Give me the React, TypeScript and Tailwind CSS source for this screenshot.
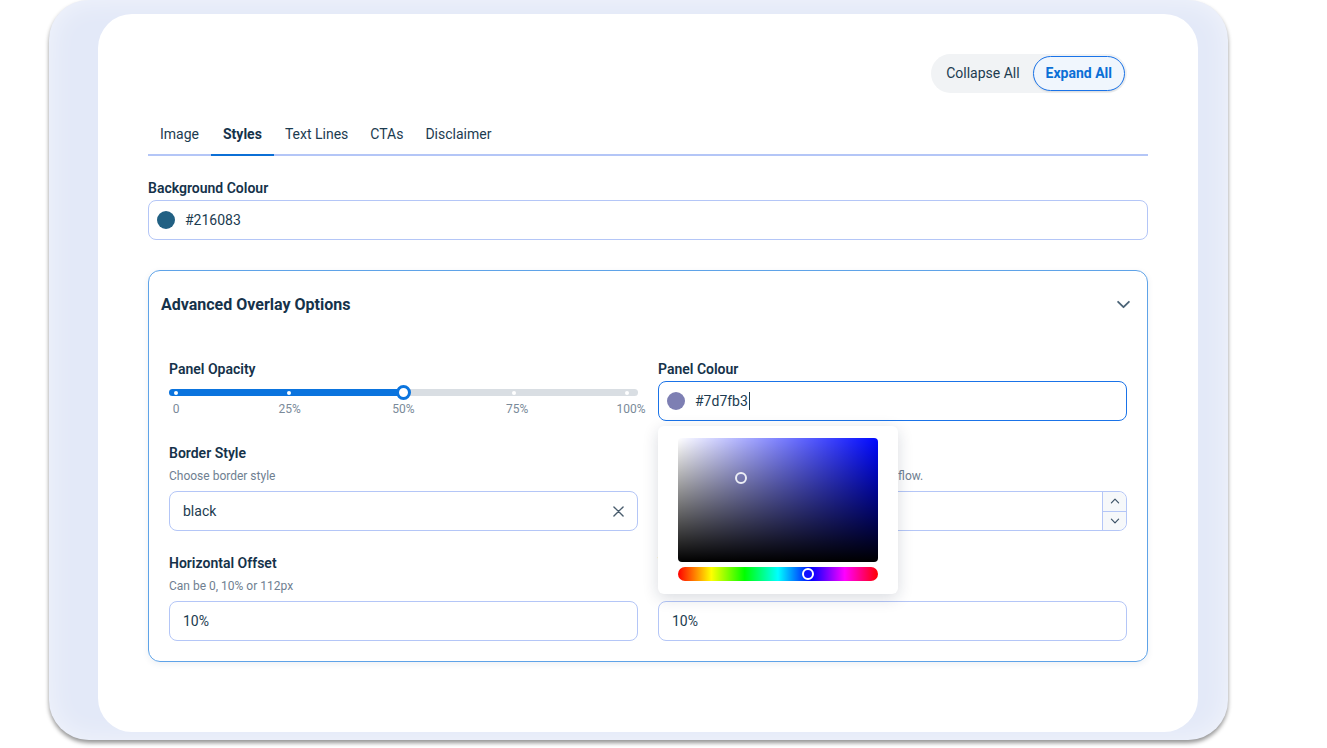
import React from "react";

const font = { fontFamily: "Roboto, 'Noto Sans', sans-serif" };

function Field({
  label,
  helper,
  children,
}: {
  label: string;
  helper?: string;
  children: React.ReactNode;
}) {
  return (
    <div className="flex flex-col">
      <div className="text-[14px] leading-[20px] font-semibold text-[#15324a]">{label}</div>
      {helper ? (
        <div className="mt-[5px] mb-[7px] whitespace-nowrap text-[12px] leading-[16px] text-[#6f8091]">{helper}</div>
      ) : (
        <div className="h-[2px]" />
      )}
      {children}
    </div>
  );
}

function TextInput({ value, right }: { value: string; right?: React.ReactNode }) {
  return (
    <div className="flex h-[40px] items-center rounded-[8px] border border-[#b4c6f7] bg-white pl-[13px] text-[14px] text-[#1c3b50]">
      <span className="flex-1">{value}</span>
      {right}
    </div>
  );
}

function Chevron({ up, className }: { up?: boolean; className?: string }) {
  return (
    <svg viewBox="0 0 16 10" className={className} fill="none" stroke="currentColor" strokeWidth="2" strokeLinecap="round" strokeLinejoin="round">
      {up ? <path d="M2 8 L8 2 L14 8" /> : <path d="M2 2 L8 8 L14 2" />}
    </svg>
  );
}

export default function App() {
  return (
    <div className="h-[748px] w-full overflow-hidden bg-white" style={font}>
      <div className="ml-[49px] flex h-[740px] w-[1179px] rounded-[40px] bg-[#e3e9f8] pl-[49px] pr-[30px] pt-[14px] pb-[8px] shadow-[inset_0_0_28px_rgba(255,255,255,0.55),0_3px_4px_rgba(0,0,0,0.42)]">
        <div className="flex h-[718px] w-[1100px] flex-col rounded-[34px] bg-white px-[50px] pt-[40px]">
          {/* Toggle */}
          <div className="flex justify-end pr-[21px]">
            <div className="flex h-[39px] items-center rounded-full bg-[#f1f3f5] p-[2px]">
              <button className="px-[13px] text-[14px] text-[#1c3b50]">Collapse All</button>
              <button className="h-[35px] rounded-full border border-[#1a73e8] bg-[#f0f6fd] px-[12px] text-[14px] font-bold text-[#0b6fd6] shadow-[0_1px_2px_rgba(0,0,0,0.1)]">
                Expand All
              </button>
            </div>
          </div>

          {/* Tabs */}
          <div className="mt-[21px] flex border-b-2 border-[#b4c6f7] text-[14px] text-[#1c3b50]">
            <div className="px-[12px] pt-[10px] pb-[10px] leading-[20px]">Image</div>
            <div className="-mb-[2px] border-b-2 border-[#0b6fd6] px-[12px] pt-[10px] pb-[10px] font-bold leading-[20px] text-[#15324a]">
              Styles
            </div>
            <div className="px-[11px] pt-[10px] pb-[10px] leading-[20px]">Text Lines</div>
            <div className="px-[11px] pt-[10px] pb-[10px] leading-[20px]">CTAs</div>
            <div className="px-[11px] pt-[10px] pb-[10px] leading-[20px]">Disclaimer</div>
          </div>

          {/* Background Colour */}
          <div className="mt-[22px]">
            <div className="text-[14px] leading-[20px] font-semibold text-[#15324a]">Background Colour</div>
            <div className="mt-[2px] flex h-[40px] items-center gap-[10px] rounded-[8px] border border-[#b4c6f7] pl-[8px] text-[14px] text-[#1c3b50]">
              <span className="h-[18px] w-[18px] rounded-full bg-[#216083]" />
              <span>#216083</span>
            </div>
          </div>

          {/* Accordion */}
          <div className="mt-[30px] rounded-[12px] border border-[#5fa3e8] shadow-[0_2px_6px_rgba(30,60,120,0.08)]">
            <div className="flex h-[67px] items-center justify-between pl-[12px] pr-[16px]">
              <span className="text-[16px] font-bold text-[#15324a]">Advanced Overlay Options</span>
              <Chevron className="h-[9px] w-[15px] text-[#4a6376]" />
            </div>
            <div className="grid grid-cols-2 gap-x-[20px] gap-y-[22px] px-[20px] pt-[21px] pb-[20px]">
              {/* Panel Opacity */}
              <div className="flex flex-col">
                <div className="text-[14px] leading-[20px] font-semibold text-[#15324a]">Panel Opacity</div>
                <div className="relative mt-[10px] h-[7px] rounded-full bg-[#d9dee3]">
                  <div className="h-full w-[234px] rounded-full bg-[#0b74de]" />
                  <div className="absolute inset-0 flex items-center justify-between px-[7px]">
                    <span className="h-[4px] w-[4px] -translate-x-1/2 rounded-full bg-white" />
                    <span className="h-[4px] w-[4px] -translate-x-1/2 rounded-full bg-white" />
                    <span className="h-[4px] w-[4px] -translate-x-1/2 rounded-full bg-transparent" />
                    <span className="h-[4px] w-[4px] -translate-x-1/2 rounded-full bg-white" />
                    <span className="h-[4px] w-[4px] -translate-x-1/2 rounded-full bg-white" />
                  </div>
                  <div className="absolute left-[227px] top-[-4px] h-[15px] w-[15px] rounded-full border-[3px] border-[#0b74de] bg-white" />
                </div>
                <div className="mt-[5px] flex justify-between px-[7px] text-[12px] leading-[16px] text-[#7a8a99]">
                  <span className="flex w-0 justify-center whitespace-nowrap">0</span>
                  <span className="flex w-0 justify-center whitespace-nowrap">25%</span>
                  <span className="flex w-0 justify-center whitespace-nowrap">50%</span>
                  <span className="flex w-0 justify-center whitespace-nowrap">75%</span>
                  <span className="flex w-0 justify-center whitespace-nowrap">100%</span>
                </div>
              </div>

              {/* Panel Colour */}
              <div className="relative flex flex-col">
                <div className="text-[14px] leading-[20px] font-semibold text-[#15324a]">Panel Colour</div>
                <div className="mt-[2px] flex h-[40px] items-center gap-[10px] rounded-[8px] border-[1.5px] border-[#1a73e8] pl-[8px] text-[14px] text-[#1c3b50]">
                  <span className="h-[18px] w-[18px] rounded-full bg-[#7d7fb3]" />
                  <span className="flex items-center">
                    #7d7fb3
                    <span className="ml-[1px] h-[18px] w-px bg-[#1c3b50]" />
                  </span>
                </div>
                {/* Color picker popover */}
                <div className="absolute left-0 top-[67px] z-10 w-[240px] rounded-[6px] bg-white px-[20px] pt-[12px] pb-[13px] shadow-[0_4px_16px_rgba(20,30,60,0.16)]">
                  <div className="relative h-[124px] w-[200px] rounded-[4px] bg-[#0008ff] bg-[linear-gradient(to_top,#000,rgba(0,0,0,0)),linear-gradient(to_right,#fff,rgba(255,255,255,0))]">
                    <div className="absolute left-[57px] top-[34px] h-[12px] w-[12px] rounded-full border-2 border-[#eceef5]" />
                  </div>
                  <div className="relative mt-[5px] h-[14px] w-[200px] rounded-full bg-[linear-gradient(to_right,#f00,#ff0,#0f0,#0ff,#00f,#f0f,#f00)]">
                    <div className="absolute left-[124px] top-[1px] h-[12px] w-[12px] rounded-full border-[2.5px] border-white bg-[#1010ff]" />
                  </div>
                </div>
              </div>

              {/* Border Style */}
              <Field label="Border Style" helper="Choose border style">
                <TextInput
                  value="black"
                  right={
                    <svg viewBox="0 0 12 12" className="mr-[13px] h-[11px] w-[11px] text-[#4a5d6e]" fill="none" stroke="currentColor" strokeWidth="1.5" strokeLinecap="round">
                      <path d="M1 1 L11 11 M11 1 L1 11" />
                    </svg>
                  }
                />
              </Field>

              {/* Border Width */}
              <Field label="Border Width" helper="Width in pixels, this value does not affect the flow.">
                <div className="flex h-[40px] items-center rounded-[8px] border border-[#b4c6f7] bg-white text-[14px] text-[#1c3b50]">
                  <span className="flex-1" />
                  <div className="flex h-full w-[24px] flex-col rounded-r-[8px] border-l border-[#b4c6f7] bg-[#f6f8fa]">
                    <div className="flex flex-1 items-center justify-center border-b border-[#b4c6f7]">
                      <Chevron up className="h-[6px] w-[10px] text-[#3c5266]" />
                    </div>
                    <div className="flex flex-1 items-center justify-center">
                      <Chevron className="h-[6px] w-[10px] text-[#3c5266]" />
                    </div>
                  </div>
                </div>
              </Field>

              {/* Horizontal Offset */}
              <Field label="Horizontal Offset" helper="Can be 0, 10% or 112px">
                <TextInput value="10%" />
              </Field>

              {/* Vertical Offset */}
              <Field label="Vertical Offset" helper="Can be 0, 10% or 112px">
                <TextInput value="10%" />
              </Field>
            </div>
          </div>
        </div>
      </div>
    </div>
  );
}
